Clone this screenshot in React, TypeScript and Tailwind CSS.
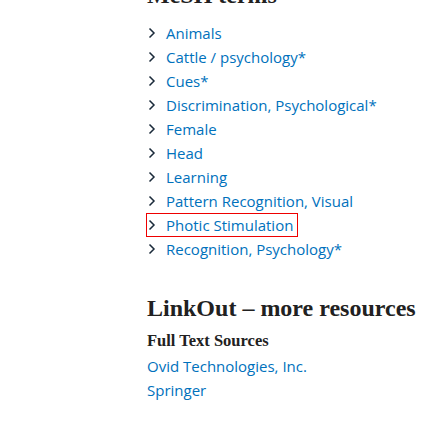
const TERMS = [
  "Animals",
  "Cattle / psychology*",
  "Cues*",
  "Discrimination, Psychological*",
  "Female",
  "Head",
  "Learning",
  "Pattern Recognition, Visual",
  "Photic Stimulation",
  "Recognition, Psychology*",
];

const SANS = "font-['Open_Sans','Noto_Sans',sans-serif]";
const SERIF = "font-['Liberation_Serif','Times_New_Roman',serif]";

function Chevron() {
  return (
    <svg width="8" height="12" viewBox="0 0 8 12" className="shrink-0">
      <path d="M1.5 1.5 L6 6 L1.5 10.5" fill="none" stroke="#1a2a3a" strokeWidth="1.5" />
    </svg>
  );
}

export default function App() {
  return (
    <div className="h-[448px] w-[448px] overflow-hidden bg-white">
      <div className="ml-[147px] -mt-[17px]">
        <h2 className={`${SERIF} text-[24px] font-bold leading-[24px] text-[#212121]`}>
          MeSH terms
        </h2>
        <ul className={`${SANS} mt-[14px] text-[15px] leading-[24px] text-[#0071bc]`}>
          {TERMS.map((term) => (
            <li key={term} className="flex">
              <div
                className={
                  term === "Photic Stimulation"
                    ? "flex items-center gap-[10px] border border-[#e00] pl-[1px] pr-[4px] -ml-[1px] leading-[22px]"
                    : "flex items-center gap-[10px] pl-[1px]"
                }
              >
                <Chevron />
                <span>{term}</span>
              </div>
            </li>
          ))}
        </ul>
        <h2 className={`${SERIF} mt-[32px] text-[24px] font-bold leading-[30px] text-[#212121]`}>
          LinkOut – more resources
        </h2>
        <h3 className={`${SERIF} mt-[7px] text-[16.5px] font-bold leading-[22px] text-[#212121]`}>
          Full Text Sources
        </h3>
        <div className={`${SANS} text-[15px] leading-[24px] text-[#0071bc]`}>
          <div className="mt-[2px]">Ovid Technologies, Inc.</div>
          <div>Springer</div>
        </div>
      </div>
    </div>
  );
}
